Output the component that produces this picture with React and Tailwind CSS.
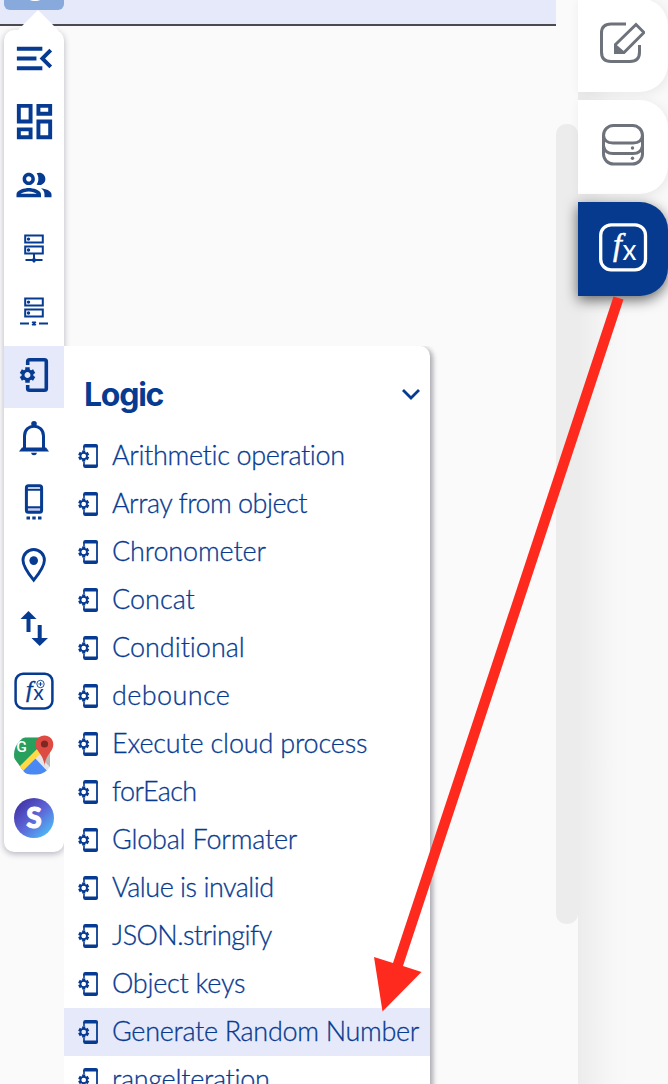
import React from "react";
import { MdMenuOpen, MdOutlineDashboard } from "react-icons/md";

const items = [
  ["Arithmetic operation", "tracking-[-0.35px]"],
  ["Array from object", "tracking-[-0.5px]"],
  ["Chronometer", "tracking-[-0.15px]"],
  ["Concat", "tracking-[0px]"],
  ["Conditional", "tracking-[-0.03px]"],
  ["debounce", "tracking-[0.4px]"],
  ["Execute cloud process", "tracking-[-0.18px]"],
  ["forEach", "tracking-[-0.65px]"],
  ["Global Formater", "tracking-[-0.2px]"],
  ["Value is invalid", "tracking-[-0.5px]"],
  ["JSON.stringify", "tracking-[-0.55px]"],
  ["Object keys", "tracking-[-0.25px]"],
  ["Generate Random Number", "tracking-[-0.31px]"],
  ["rangeIteration", "tracking-[-0.3px]"],
];

function Gear({ cx, cy, r, w }) {
  return (
    <g transform={`translate(${cx} ${cy})`}>
      {[0, 60, 120].map((a) => (
        <path key={a} d={`M0 ${-r}V${-r * 0.5}M0 ${r * 0.5}V${r}`} strokeWidth={r * 0.58} transform={`rotate(${a})`} />
      ))}
      <circle r={r * 0.58} strokeWidth={w} />
    </g>
  );
}

function SmallPhone() {
  return (
    <svg width="22" height="24" viewBox="0 0 22 24" fill="none" stroke="currentColor" className="shrink-0">
      <path d="M6 6.5V2M6 17.5V22" strokeWidth="1.6" />
      <path d="M5.2 3.4V2Q5.2 0 7.2 0H18Q20 0 20 2V3.4ZM5.2 20.6V22Q5.2 24 7.2 24H18Q20 24 20 22V20.6Z" fill="currentColor" stroke="none" />
      <path d="M19 2V22" strokeWidth="1.8" />
      <Gear cx={5.7} cy={12} r={5.5} w={1.7} />
    </svg>
  );
}

function LogicIcon() {
  return (
    <svg width="40" height="40" viewBox="0 0 40 40" fill="none" stroke="currentColor">
      <path d="M13.7 10V6.5Q13.7 4.8 15.5 4.8H30.5Q32.3 4.8 32.3 6.5V33.5Q32.3 35.2 30.5 35.2H15.5Q13.7 35.2 13.7 33.5V30" strokeWidth="3.6" />
      <Gear cx={13.5} cy={20} r={7.7} w={3} />
    </svg>
  );
}

function People() {
  return (
    <svg width="42" height="42" viewBox="0 0 24 24" fill="currentColor">
      <path d="M9 13.750c-2.340 0-7 1.170-7 3.500V19h14v-1.750c0-2.330-4.660-3.500-7-3.500zM4.340 17c.840-.580 2.870-1.250 4.660-1.250s3.820.670 4.660 1.250H4.340zM9 12c1.930 0 3.500-1.570 3.500-3.500S10.930 5 9 5 5.500 6.570 5.500 8.500 7.070 12 9 12zm0-5c.830 0 1.500.670 1.500 1.500S9.830 10 9 10s-1.500-.670-1.500-1.500S8.170 7 9 7zm7.040 6.810c1.160.840 1.960 1.960 1.960 3.440V19h4v-1.750c0-2.020-3.500-3.170-5.960-3.440zM15 12c1.930 0 3.500-1.570 3.500-3.500S16.930 5 15 5c-.540 0-1.040.130-1.500.350.630.890 1 1.980 1 3.150s-.370 2.260-1 3.150c.460.220.960.350 1.500.350z" />
    </svg>
  );
}

function Servers({ off }) {
  return (
    <svg width="40" height="40" viewBox="0 0 40 40" fill="none" stroke="currentColor" strokeWidth="2">
      <path d="M11.2 7.6H28.8V14.6H11.2ZM11.2 18.500H28.8V25.600H11.2Z" />
      <circle cx="14.5" cy="11.1" r="1.7" fill="currentColor" stroke="none" />
      <circle cx="14.5" cy="22" r="1.7" fill="currentColor" stroke="none" />
      {off ? <path d="M6 32.500H15M25 32.500H34M18.300 30.800L21.700 34.200M21.700 30.800L18.300 34.200" /> : <path d="M20 26V34M11.5 32H28.5M18.500 32L20 33.500L21.500 32L20 30.500Z" />}
    </svg>
  );
}

function Bell() {
  return (
    <svg width="40" height="40" viewBox="0 0 40 40" fill="none" stroke="currentColor">
      <path d="M10.5 31V18C10.5 5 29.5 5 29.5 18V31" strokeWidth="3" />
      <path d="M5 33.4L8 29.6H32L35 33.4Z" fill="currentColor" stroke="none" />
      <circle cx="20" cy="5.8" r="2.8" fill="currentColor" stroke="none" />
      <path d="M17 34.8H23Q22.5 37.3 20 37.3Q17.500 37.3 17 34.800Z" fill="currentColor" stroke="none" />
    </svg>
  );
}

function Device() {
  return (
    <svg width="40" height="40" viewBox="0 0 40 40" fill="none" stroke="currentColor">
      <path d="M12 28.500H28" stroke="#c5cdec" strokeWidth="3" />
      <rect x="12.4" y="4.700" width="15.200" height="26.500" rx="2" strokeWidth="3" />
      <path d="M12 8.800H28M12 26.300H28" strokeWidth="2" />
      <path d="M12.500 37H16M18.300 37H21.700M24 37H27.500" strokeWidth="3" />
    </svg>
  );
}

function Pin() {
  return (
    <svg width="40" height="40" viewBox="0 0 40 40">
      <path d="M20 36.500C14 29 9.300 22 9.300 16.500A10.700 10.700 0 0 1 30.700 16.500C30.700 22 26 29 20 36.500Z" transform="translate(-.3 -1.300)" fill="none" stroke="currentColor" strokeWidth="2.900" />
      <circle cx="19.700" cy="15.600" r="4.300" fill="currentColor" />
    </svg>
  );
}

function Swap() {
  return (
    <svg width="40" height="40" viewBox="0 0 40 40" fill="currentColor">
      <path d="M14.500 3L22.500 11H16.500V24H12.500V11H6.500ZM23.700 17H27.700V30H34L25.700 38L17.500 30H23.700Z" />
    </svg>
  );
}

function FxMark() {
  return (
    <>
      <text x="15" y="32" fontFamily="Liberation Serif, serif" fontStyle="italic" fontSize="32" fill="currentColor" stroke="currentColor" strokeWidth=".5">f</text>
      <text x="24.600" y="36.800" fontFamily="Lato, sans-serif" fontSize="28" fill="currentColor">x</text>
    </>
  );
}

function FxPlus() {
  return (
    <svg width="40" height="40" viewBox="0 0 40 40" fill="none" stroke="currentColor">
      <rect x="1.600" y="2.800" width="36.800" height="34.600" rx="7.500" strokeWidth="2.500" />
      <g transform="translate(.7 1.800) scale(.75)" stroke="none"><FxMark /></g>
      <circle cx="26.500" cy="13" r="3.700" strokeWidth=".9" fill="white" />
      <path d="M26.500 11V15M24.500 13H28.500" strokeWidth=".9" />
    </svg>
  );
}

function MapLogo() {
  return (
    <svg width="40" height="40" viewBox="0 0 40 40">
      <defs><clipPath id="mapShape"><path d="M8 2.500H27L36 13V35L31 39.500H12L0 23V14Q2 5 8 2.500Z" /></clipPath><clipPath id="mapRound"><circle cx="20" cy="20" r="20" /></clipPath></defs>
      <g clipPath="url(#mapRound)"><g clipPath="url(#mapShape)">
        <path d="M0 0H40V40H0Z" fill="#e5e5e5" />
        <path d="M0 0H30L22 20L5 36L0 30Z" fill="#26a05c" />
        <path d="M19 21L37 40H7L5 36Z" fill="#4a89f3" />
        <path d="M31 12H38V34L29 25Z" fill="#b9b9b9" />
        <path d="M3 34L23 14L27 18L7 38Z" fill="#ffda48" />
      </g></g>
      <path d="M30.500 31C30.200 20 21.500 16 21.500 9.500C21.500 4 25.500 .5 30.500 .5S39.300 4 39.300 9.500C39.300 17 31 20 30.500 31Z" fill="#de4b43" />
      <circle cx="30.500" cy="9" r="3.600" fill="#7e2823" />
      <text x="2.300" y="16.500" fontFamily="Roboto, sans-serif" fontWeight="500" fontSize="15.500" fill="white">G</text>
    </svg>
  );
}

function SLogo() {
  return (
    <svg width="40" height="40" viewBox="0 0 40 40">
      <defs>
        <linearGradient id="sFill" x1=".15" y1=".1" x2=".9" y2=".9">
          <stop offset="0" stopColor="#4335a8" /><stop offset=".5" stopColor="#5d67d8" /><stop offset="1" stopColor="#4ebcf8" />
        </linearGradient>
      </defs>
      <circle cx="20" cy="20" r="20" fill="url(#sFill)" />
      <text x="20" y="30.300" textAnchor="middle" fontFamily="Lato, sans-serif" fontWeight="900" fontSize="28" fill="white" stroke="white" strokeWidth="1">S</text>
    </svg>
  );
}

function RailItem({ active, children }) {
  return (
    <div className={active ? "mt-[2px] -mb-[2px] flex h-[62px] items-center justify-center bg-[#e6e9fa] pb-[4px]" : "flex h-[62px] items-center justify-center"}>
      {children}
    </div>
  );
}

function Toolbox() {
  return (
    <aside className="absolute top-[30px] left-1 h-[822px] w-[60px] rounded-[10px] bg-white text-[#073b91] shadow-[0_2px_6px_rgba(20,20,60,0.3)]">
      <svg className="absolute -top-5 left-[14px]" width="40" height="24" viewBox="0 0 40 24"><path d="M20 0L40 20V24H0V20Z" fill="white" /></svg>
      <nav className="relative -mt-[3px] flex h-[822px] flex-col justify-between">
        <RailItem><MdMenuOpen size={47} className="mt-px shrink-0" /></RailItem>
        <RailItem><MdOutlineDashboard size={47} className="mt-px shrink-0" /></RailItem>
        <RailItem><People /></RailItem>
        <RailItem><Servers /></RailItem>
        <RailItem><Servers off /></RailItem>
        <RailItem active><LogicIcon /></RailItem>
        <RailItem><Bell /></RailItem>
        <RailItem><Device /></RailItem>
        <RailItem><Pin /></RailItem>
        <RailItem><Swap /></RailItem>
        <RailItem><FxPlus /></RailItem>
        <RailItem><MapLogo /></RailItem>
        <RailItem><SLogo /></RailItem>
      </nav>
      <LogicMenu />
    </aside>
  );
}

function LogicMenu() {
  return (
    <section className="absolute top-[316px] left-[60px] w-[366px] rounded-tr-[10px] bg-white shadow-[3px_2px_5px_rgba(20,20,40,0.35)] [clip-path:inset(0_-12px_0_0)]">
      <header className="flex h-[86px] items-center justify-between pt-[11px] pr-[9px] pl-5">
        <h2 className="font-[Inter,sans-serif] text-[32px] leading-none font-bold tracking-[-1.25px]">Logic</h2>
        <svg width="20" height="14" viewBox="0 0 20 14" fill="none" stroke="currentColor" strokeWidth="2.800"><path d="M2 2L10 10L18 2" /></svg>
      </header>
      <ul>
        {items.map(([label, tracking]) => (
          <li key={label} className={label === "Generate Random Number" ? "flex h-12 items-center gap-3 bg-[#e6e9fa] pl-[14px]" : "flex h-12 items-center gap-3 pl-[14px]"}>
            <SmallPhone />
            <span className={`pb-1 font-[Lato,sans-serif] text-[27px] leading-none font-light whitespace-nowrap [-webkit-text-stroke:0.3px_#073b91] [font-variant-ligatures:none] ${tracking}`}>{label}</span>
          </li>
        ))}
      </ul>
    </section>
  );
}

function SideTabs() {
  return (
    <aside className="w-[90px] bg-linear-to-r from-[#ececec] via-[#f6f6f6] via-35% to-[#f9f9f9] to-55%">
      <div className="-mt-[2px] flex flex-col gap-2">
        <div className="flex h-[94px] items-center justify-center rounded-r-[28px] bg-white pr-[4px] pb-[4px] text-[#6d727b] shadow-[2px_2px_12px_rgba(0,0,0,0.07)]">
          <svg width="48" height="48" viewBox="0 0 48 48" fill="none" stroke="currentColor" strokeWidth="3">
            <path d="M29 5H14Q4.500 5 4.500 14V33Q4.500 42.500 14 42.500H33Q42.500 42.500 42.500 33V26" />
            <path d="M18.500 25.500L39 5.500L47 13.500L27 33.500H18.500Z" /><path d="M18.500 27L26 33.500M20 29V32H23" />
          </svg>
        </div>
        <div className="flex h-[94px] items-center justify-center rounded-r-[28px] bg-white pb-[2px] text-[#6d727b] shadow-[2px_2px_12px_rgba(0,0,0,0.07)]">
          <svg width="48" height="48" viewBox="0 0 48 48" fill="none" stroke="currentColor" strokeWidth="3">
            <rect x="4.500" y="3.500" width="39" height="38.500" rx="10" />
            <path d="M4.500 13Q5 21 14 21H34Q43 21 43.500 13M4.500 24Q6 31.500 14 31.500H34Q42 31.500 43.500 24" />
            <circle cx="33.500" cy="26" r="1.700" fill="currentColor" stroke="none" /><circle cx="33.500" cy="36.300" r="1.700" fill="currentColor" stroke="none" />
          </svg>
        </div>
        <div className="relative flex h-[94px] items-center justify-center rounded-r-[28px] bg-[#063a8f] pb-[2px] text-white shadow-[0_4px_14px_rgba(0,0,0,0.6)]">
          <svg width="50" height="50" viewBox="0 0 50 50" fill="none">
            <rect x="2.700" y="1.800" width="44.800" height="45" rx="10.500" stroke="currentColor" strokeWidth="3.300" />
            <FxMark />
          </svg>
        </div>
      </div>
    </aside>
  );
}

export default function App() {
  return (
    <main className="relative flex h-[1084px] w-[668px] overflow-hidden bg-[#fafafa]">
      <div className="w-[578px]">
        <div className="h-[26px] w-[556px] border-b-2 border-[#4b4b4f] bg-[#e6e9fa]">
          <div className="ml-1 flex h-[10px] w-[60px] justify-center overflow-hidden rounded-b-md bg-[#87a9dc]">
            <div className="-mt-[17px] ml-[1px] h-[18px] w-5 rounded-full bg-white" />
          </div>
        </div>
        <div className="mt-[98px] ml-[556px] h-[800px] w-[22px] rounded-[10px] bg-[#ececec]" />
      </div>
      <SideTabs />
      <Toolbox />
      <svg className="pointer-events-none absolute inset-0" width="668" height="1084" viewBox="0 0 668 1084" fill="#ff2a1e">
        <path d="M613.500 296.500L623.500 299.500L403 966L421.500 972L382.500 1011.500L374 957L393 963Z" />
      </svg>
    </main>
  );
}
